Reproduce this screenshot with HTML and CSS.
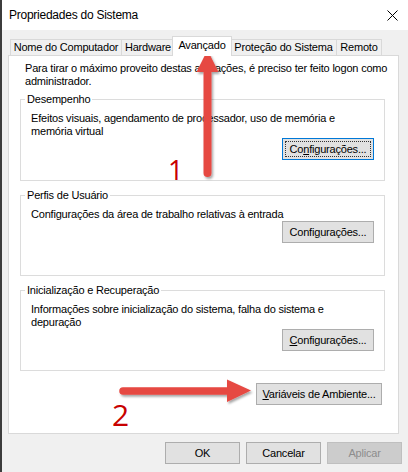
FILE: index.html
```html
<!DOCTYPE html>
<html lang="pt-BR">
<head>
<meta charset="utf-8">
<title>Propriedades do Sistema</title>
<link rel="stylesheet" href="styles.css">
</head>
<body>
<div class="window">
  <div class="titlebar">
    <span class="title">Propriedades do Sistema</span>
    <svg class="close" width="11" height="11" viewBox="0 0 11 11"><path d="M0.5 0.5 L10.5 10.5 M10.5 0.5 L0.5 10.5" stroke="#000" stroke-width="1" fill="none"/></svg>
  </div>
  <div class="main">
    <div class="tabs">
      <div class="tab t-nome">Nome do Computador</div>
      <div class="tab t-hw">Hardware</div>
      <div class="tab sel t-av">Avançado</div>
      <div class="tab t-prot">Proteção do Sistema</div>
      <div class="tab last t-rem">Remoto</div>
    </div>
    <div class="panel">
      <p class="intro">Para tirar o máximo proveito destas alterações, é preciso ter feito logon como<br>administrador.</p>
      <fieldset class="group g-first">
        <legend>Desempenho</legend>
        <p>Efeitos visuais, agendamento de processador, uso de memória e<br>memória virtual</p>
        <button class="btn cfg default">Co<u>n</u>figurações...</button>
      </fieldset>
      <fieldset class="group">
        <legend>Perfis de Usuário</legend>
        <p>Configurações da área de trabalho relativas à entrada</p>
        <button class="btn cfg">Confi<u>g</u>urações...</button>
      </fieldset>
      <fieldset class="group">
        <legend>Inicialização e Recuperação</legend>
        <p>Informações sobre inicialização do sistema, falha do sistema e<br>depuração</p>
        <button class="btn cfg"><u>C</u>onfigurações...</button>
      </fieldset>
      <button class="btn env"><u>V</u>ariáveis de Ambiente...</button>
    </div>
  </div>
  <div class="footer">
    <button class="btn foot">OK</button>
    <button class="btn foot">Cancelar</button>
    <button class="btn foot" disabled>Aplicar</button>
  </div>
</div>
<svg class="annot" width="408" height="472" viewBox="0 0 408 472">
  <defs>
    <filter id="sh" x="-50%" y="-50%" width="200%" height="200%">
      <feDropShadow dx="1.5" dy="2" stdDeviation="1.2" flood-color="#000" flood-opacity="0.35"/>
    </filter>
  </defs>
  <g filter="url(#sh)" fill="#e64842">
    <line x1="207.5" y1="173" x2="207.5" y2="68" stroke="#e64842" stroke-width="8" stroke-linecap="round"/>
    <path d="M207.5 50 L218.5 72 L196.5 72 Z"/>
    <line x1="123" y1="391" x2="232" y2="391" stroke="#e64842" stroke-width="7.5" stroke-linecap="round"/>
    <path d="M251 390.5 L227 379.5 L227 402 Z"/>
  </g>
  <text class="num" x="168" y="180" font-size="27">1</text>
  <text class="num" x="112" y="426" font-size="30">2</text>
</svg>
</body>
</html>
```
FILE: styles.css
```css
html, body {
  margin: 0;
  padding: 0;
}
body {
  position: relative;
  width: 408px;
  height: 472px;
  overflow: hidden;
  font-family: "Liberation Sans", Arial, sans-serif;
  font-size: 11px;
  letter-spacing: -0.2px;
  color: #000;
  background: #f0f0f0;
}
.window {
  width: 408px;
  height: 472px;
  box-sizing: border-box;
  border-left: 2px solid #3c3c3c;
  background: #f0f0f0;
  display: flex;
  flex-direction: column;
}
.titlebar {
  height: 30px;
  flex: none;
  background: #fff;
  display: flex;
  align-items: center;
  justify-content: space-between;
  padding: 0 10px 0 7px;
}
.title {
  font-size: 12px;
  letter-spacing: -0.25px;
}
.close {
  display: block;
}
.main {
  padding: 6px 9px 0 6px;
  display: flex;
  flex-direction: column;
}
.tabs {
  display: flex;
  align-items: flex-end;
  height: 19px;
  padding-left: 2px;
}
.tab {
  box-sizing: border-box;
  height: 16px;
  border: 1px solid #d9d9d9;
  border-bottom: none;
  border-right: none;
  background: #f0f0f0;
  text-align: center;
  line-height: 15px;
  white-space: nowrap;
}
.tab.last {
  border-right: 1px solid #d9d9d9;
}
.t-nome { width: 111px; }
.t-hw { width: 53px; }
.t-av { width: 60px; }
.t-prot { width: 106px; }
.t-rem { width: 46px; }
.tab.sel {
  position: relative;
  z-index: 1;
  align-self: flex-start;
  height: 20px;
  margin: 0 -2px;
  background: #fff;
  border-right: 1px solid #d9d9d9;
  line-height: 17px;
}
.panel {
  height: 379px;
  box-sizing: border-box;
  background: #fff;
  border: 1px solid #d9d9d9;
  padding: 6px 13px 0 11px;
  display: flex;
  flex-direction: column;
}
.intro {
  margin: 0 -8px 4px 5px;
  line-height: 13px;
  white-space: nowrap;
}
.group {
  margin: 0;
  min-width: 0;
  box-sizing: border-box;
  height: 88px;
  padding: 6px 10px 12px 10px;
  border: 1px solid #dcdcdc;
  display: flex;
  flex-direction: column;
}
.group.g-first {
  height: 89px;
}
.group + .group {
  margin-top: 7px;
}
.group legend {
  padding: 0 2px;
  margin-left: -6px;
  line-height: 14px;
}
.group p {
  margin: 0;
  line-height: 13px;
  white-space: nowrap;
}
.btn {
  box-sizing: border-box;
  height: 22px;
  padding: 0;
  border: 1px solid #adadad;
  background: #e1e1e1;
  font: inherit;
  letter-spacing: inherit;
  color: #000;
  white-space: nowrap;
}
.btn.cfg {
  width: 92px;
  margin-top: auto;
  align-self: flex-end;
}
.btn.default {
  border-color: #0078d7;
  outline: 1px dotted #333;
  outline-offset: -4px;
}
.btn.env {
  width: 126px;
  margin-top: 12px;
  margin-right: 3px;
  align-self: flex-end;
}
.footer {
  display: flex;
  justify-content: flex-end;
  gap: 6px;
  padding: 8px 6px 0 0;
}
.btn.foot {
  width: 75px;
}
.btn.foot:disabled {
  background: #cccccc;
  border-color: #bfbfbf;
  color: #8d8d8d;
}
.annot {
  position: absolute;
  left: 0;
  top: 0;
  pointer-events: none;
}
.num {
  font-family: "Open Sans", "Liberation Sans", sans-serif;
  fill: #c80000;
  letter-spacing: 0;
}
```
